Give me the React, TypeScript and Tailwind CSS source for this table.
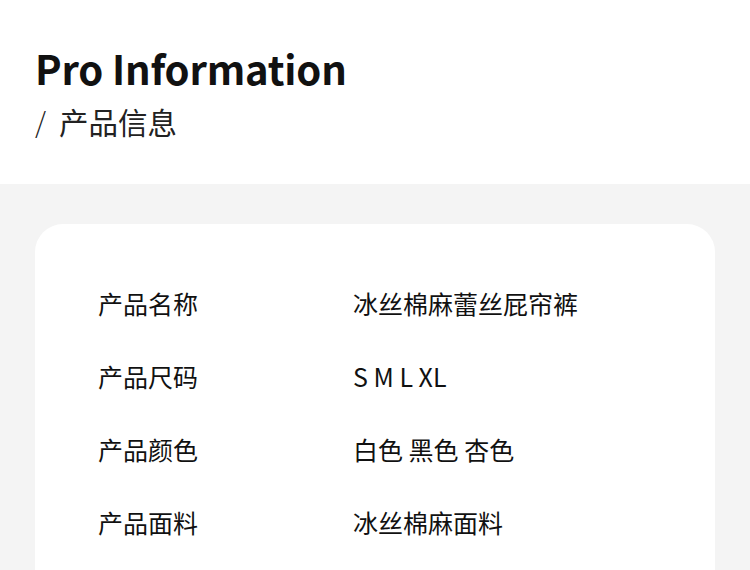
import React from "react";

const ROWS = [
  { label: "产品名称", value: "冰丝棉麻蕾丝屁帘裤" },
  { label: "产品尺码", value: "S M L XL" },
  { label: "产品颜色", value: "白色 黑色 杏色" },
  { label: "产品面料", value: "冰丝棉麻面料" },
];

export default function App() {
  return (
    <div
      className="w-[750px] h-[570px] overflow-hidden bg-[#f4f4f4] text-[#111]"
      style={{ fontFamily: '"Noto Sans CJK SC", "Noto Sans", sans-serif' }}
    >
      {/* Header */}
      <div className="h-[184px] bg-white px-[35px] pt-[44px]">
        <h1 className="text-[40px] leading-[48px] font-bold tracking-[-0.2px]">Pro Information</h1>
        <div className="mt-[9px] flex items-center text-[29.5px] leading-[40px] text-[#222]">
          <span className="text-[28px] font-light">/</span>
          <span className="ml-[13px]">产品信息</span>
        </div>
      </div>

      {/* Card */}
      <div className="px-[35px] pt-[40px]">
        <div className="rounded-[28px] bg-white pl-[63px] pt-[43px] h-[400px]">
          {ROWS.map((row, idx) => (
            <div key={idx} className="flex items-center h-[73px] text-[25px]">
              <div className="w-[255px]">{row.label}</div>
              <div>{row.value}</div>
            </div>
          ))}
        </div>
      </div>
    </div>
  );
}
